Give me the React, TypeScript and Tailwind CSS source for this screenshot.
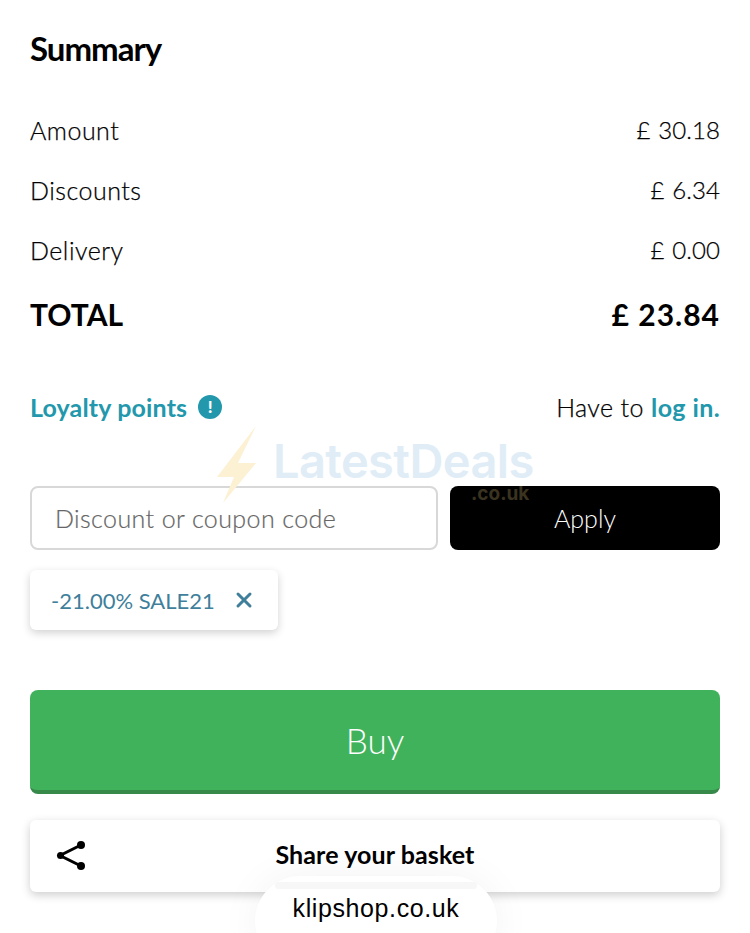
import { X } from 'lucide-react';

const rows = [
  { label: 'Amount', value: '£ 30.18' },
  { label: 'Discounts', value: '£ 6.34' },
  { label: 'Delivery', value: '£ 0.00' },
];

function Watermark() {
  return (
    <div className="absolute left-[216px] top-[424px] w-[330px] h-[82px] pointer-events-none">
      <svg className="absolute left-0 top-0" width="44" height="82" viewBox="0 0 44 82">
        <path d="M40 2 L1 53 L18 53 L7 79 L40 39 L22 39 Z" fill="#fdf1d3" />
      </svg>
      <span className="absolute left-[57px] top-[16px] text-[47px] leading-[42px] font-semibold tracking-[-0.6px] text-[#e0edf7] font-['Inter',sans-serif]">
        LatestDeals
      </span>
      <span className="absolute left-[255px] top-[61px] text-[19px] leading-[18px] font-bold text-[#3a3320] font-['Inter',sans-serif]">
        .co.uk
      </span>
    </div>
  );
}

export default function App() {
  return (
    <div className="relative w-[750px] h-[933px] overflow-hidden bg-white text-black font-['Lato',sans-serif]">
      <div className="px-[30px] pt-[28px]">
        <h1 className="text-[33px] leading-[40px] font-bold tracking-[-1px]">Summary</h1>

        <div className="mt-[47px] flex flex-col gap-[30px]">
          {rows.map((r) => (
            <div key={r.label} className="flex justify-between text-[25px] leading-[30px] font-light [-webkit-text-stroke:0.25px]">
              <span className="tracking-[0.5px]">{r.label}</span>
              <span className="text-[24px] tracking-[0.1px] [word-spacing:1px]">{r.value}</span>
            </div>
          ))}
        </div>
        <div className="mt-[31px] flex justify-between text-[30px] leading-[36px] font-bold">
          <span>TOTAL</span>
          <span className="tracking-[1px]">£ 23.84</span>
        </div>

        <div className="mt-[59px] flex justify-between items-center text-[25px] leading-[32px]">
          <div className="flex items-center gap-[11px] text-[#2398ac] font-bold">
            <span className="tracking-[0.15px]">Loyalty points</span>
            <span className="w-[24px] h-[24px] rounded-full bg-[#2398ac] text-white text-[17px] leading-[24px] text-center font-black">!</span>
          </div>
          <div className="font-light tracking-[0.4px]">
            <span className="[-webkit-text-stroke:0.25px]">Have to </span>
            <span className="text-[#2398ac] font-bold">log in.</span>
          </div>
        </div>

        <div className="mt-[63px] flex gap-[12px]">
          <div className="w-[408px] h-[64px] flex items-center pl-[23px] pt-[2px] bg-white rounded-[8px] border-2 border-[#d8d8d8] text-[25px] font-light tracking-[0.4px] text-[#666666] [-webkit-text-stroke:0.2px]">
            Discount or coupon code
          </div>
          <button className="w-[270px] h-[64px] pt-[2px] bg-black rounded-[8px] text-white text-[25px] font-light">Apply</button>
        </div>

        <div className="mt-[20px] w-[248px] h-[60px] flex items-center justify-between pl-[21px] pr-[22px] rounded-[6px] bg-white shadow-[0_3px_8px_rgba(0,0,0,0.18)] text-[22px] text-[#3f7f9b]">
          <span>-21.00% SALE21</span>
          <X size={24} strokeWidth={3} />
        </div>

        <button className="mt-[60px] block w-[690px] h-[104px] rounded-[8px] bg-[#41b25c] border-b-4 border-[#37894a] text-white text-[35px] font-light">
          Buy
        </button>

        <div className="relative mt-[26px] h-[72px] pb-[3px] flex items-center justify-center rounded-[6px] bg-white shadow-[0_3px_10px_rgba(0,0,0,0.2)] text-[25px] font-bold tracking-[0.1px]">
          <svg className="absolute left-[26px] top-[20px]" width="30" height="31" viewBox="0 0 30 31" fill="#000">
            <path d="M25 5 L4 15.5 L25 26" fill="none" stroke="#000" strokeWidth="3" />
            <circle cx="25" cy="5" r="4" />
            <circle cx="4.5" cy="15.5" r="3.5" />
            <circle cx="25" cy="26" r="4" />
          </svg>
          Share your basket
        </div>
      </div>

      <Watermark />

      <div className="absolute left-[255px] top-[876px] w-[242px] h-[90px] rounded-[45px] bg-white shadow-[0_0_40px_rgba(0,0,0,0.05)] text-center pt-[15px] text-[25px] leading-[34px] tracking-[0.6px] font-['Liberation_Sans',sans-serif]">
        <div className="absolute left-[20px] right-[20px] top-[6px] h-[7px] rounded-full bg-[#f7f7f7]" />
        klipshop.co.uk
      </div>
    </div>
  );
}
